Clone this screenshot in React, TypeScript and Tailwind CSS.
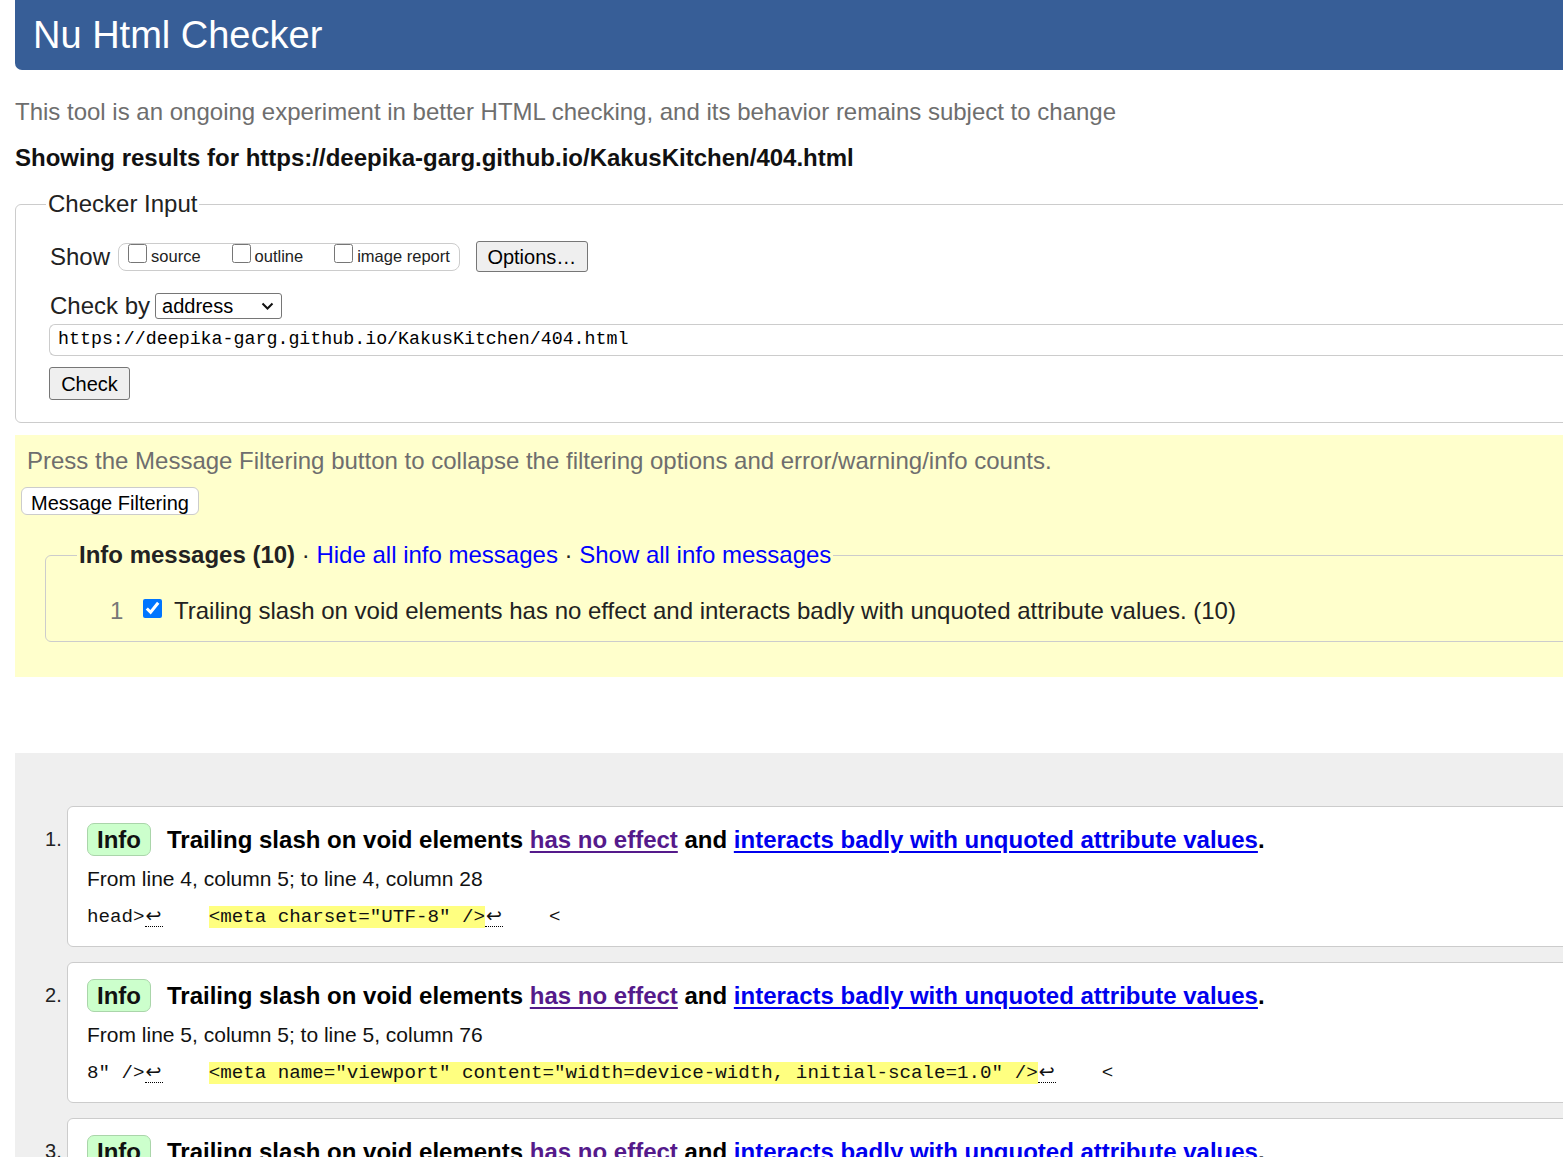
import React from 'react';

const sans = { fontFamily: '"Liberation Sans", Arial, sans-serif' };
const mono = { fontFamily: '"Liberation Mono", "DejaVu Sans Mono", monospace' };

type Extract = { before: string; hl: string; after: string };

interface Message {
  from: string;
  extract: Extract;
}

const messages: Message[] = [
  {
    from: 'From line 4, column 5; to line 4, column 28',
    extract: { before: 'head>', hl: '<meta charset="UTF-8" />', after: '<' },
  },
  {
    from: 'From line 5, column 5; to line 5, column 76',
    extract: {
      before: '8" />',
      hl: '<meta name="viewport" content="width=device-width, initial-scale=1.0" />',
      after: '<',
    },
  },
  {
    from: 'From line 6, column 5; to line 6, column 40',
    extract: { before: '0" />', hl: '<link rel="stylesheet" href="style.css" />', after: '<' },
  },
];

// line feed marker with dotted underline
function Lf() {
  return (
    <span
      className="inline-block w-[18px] text-center border-b border-dotted border-black leading-[21px] text-[19px] align-top"
      style={{ fontFamily: '"DejaVu Sans", sans-serif' }}
    >
      ↩
    </span>
  );
}

function Checkbox({ label, checked }: { label?: string; checked?: boolean }) {
  return (
    <label className="inline-flex items-center">
      <input
        type="checkbox"
        defaultChecked={checked}
        className="w-[19px] h-[19px] m-0 -translate-y-[3px]"
      />
      {label && <span className="ml-[4px] text-[16.5px] text-[#222]">{label}</span>}
    </label>
  );
}

function MessageCard({ index, msg }: { index: number; msg: Message }) {
  return (
    <li className="flex items-start mb-[15px]">
      <span className="w-[52px] shrink-0 pt-[19px] pl-[30px] text-[20px] text-[#222] leading-[28px]">{index}.</span>
      <div className="flex-1 bg-white border border-[#cccccc] rounded-l-[6px] pl-[19px] pt-[16px] pb-[17px]">
        <div className="flex items-center">
          <span className="inline-block bg-[#ccffcc] border border-[#aad5aa] rounded-[7px] w-[64px] text-center h-[33px] leading-[31px] text-[24px] font-bold text-[#111]">
            Info
          </span>
          <span className="ml-[16px] text-[24px] leading-[28px] font-bold text-black">
            Trailing slash on void elements{' '}
            <a href="#" className="text-[#551a8b] underline underline-offset-[3px]">has no effect</a>{' '}
            and{' '}
            <a href="#" className="text-[#0000ee] underline underline-offset-[3px]">
              interacts badly with unquoted attribute values
            </a>
            .
          </span>
        </div>
        <div className="mt-[11px] text-[21px] text-[#111] leading-[24px]">{msg.from}</div>
        <div className="mt-[14px] text-[19.2px] text-[#111] whitespace-pre leading-[24px]" style={mono}>
          {msg.extract.before}
          <Lf />
          {'    '}
          <span className="bg-[#ffff80]">{msg.extract.hl}</span>
          <Lf />
          {'    '}
          {msg.extract.after}
        </div>
      </div>
    </li>
  );
}

export default function App() {
  return (
    <div className="w-[1563px] h-[1157px] overflow-hidden bg-white" style={sans}>
      <div className="w-[1640px] pl-[15px]">
        <header className="h-[70px] bg-[#375e97] rounded-bl-[7px] pl-[18px] flex items-center">
          <h1 className="text-[38px] text-white leading-none">Nu Html Checker</h1>
        </header>

        <p className="mt-[28px] text-[24px] text-[#6e6e6e] leading-[28px]">
          This tool is an ongoing experiment in better HTML checking, and its behavior remains subject to change
        </p>
        <p className="mt-[18px] text-[24px] font-bold text-[#111] leading-[28px]">
          Showing results for https://deepika-garg.github.io/KakusKitchen/404.html
        </p>

        {/* checker input */}
        <fieldset className="mt-[18px] border border-[#cccccc] rounded-l-[6px] pb-[22px]">
          <legend className="ml-[30px] px-[2px] text-[24px] text-[#222] leading-[28px]">Checker Input</legend>
          <div className="pl-[34px]">
            <div className="flex items-center mt-[23px] h-[31px]">
              <span className="text-[24px] text-[#222]">Show</span>
              <div className="ml-[8px] h-[28px] border border-[#cccccc] rounded-[8px] flex items-center pl-[9px] pr-[9px]">
                <Checkbox label="source" />
                <span className="w-[31px]" />
                <Checkbox label="outline" />
                <span className="w-[31px]" />
                <Checkbox label="image report" />
              </div>
              <button className="ml-[16px] h-[31px] w-[112px] bg-[#efefef] border border-[#767676] rounded-[3px] text-[20px] text-black">
                Options…
              </button>
            </div>
            <div className="flex items-center mt-[20px] h-[28px]">
              <span className="text-[24px] text-[#222]">Check by</span>
              <div className="ml-[5px] relative w-[127px] h-[26px] border border-[#767676] rounded-[3px] flex items-center pl-[6px]">
                <span className="text-[20px] text-black">address</span>
                <svg className="absolute right-[7px] top-[8px]" width="13" height="9" viewBox="0 0 13 9">
                  <path d="M1.5 1.5 L6.5 6.5 L11.5 1.5" fill="none" stroke="#111" strokeWidth="2" />
                </svg>
              </div>
            </div>
            <div
              className="mt-[4px] -ml-[1px] h-[32px] border border-[#cccccc] border-r-0 rounded-l-[6px] flex items-center pl-[8px] text-[18.3px] text-black"
              style={mono}
            >
              https://deepika-garg.github.io/KakusKitchen/404.html
            </div>
            <button className="mt-[11px] -ml-[1px] h-[33px] w-[81px] bg-[#efefef] border border-[#767676] rounded-[3px] text-[20px] text-black">
              Check
            </button>
          </div>
        </fieldset>

        {/* message filtering */}
        <section className="mt-[12px] bg-[#ffffcc] pt-[12px] pb-[35px]">
          <p className="pl-[12px] text-[24px] text-[#6e6e6e] leading-[28px]">
            Press the Message Filtering button to collapse the filtering options and error/warning/info counts.
          </p>
          <button className="mt-[12px] ml-[6px] h-[28px] w-[178px] bg-white border border-[#cccccc] rounded-[6px] text-[20px] text-black">
            Message Filtering
          </button>
          <fieldset className="mt-[24px] ml-[30px] border border-[#cccccc] rounded-l-[6px] pb-[16px]">
            <legend className="ml-[31px] px-[2px] text-[24px] leading-[28px]">
              <b className="text-[#222]">Info messages (10)</b>
              <span className="text-[#222]"> · </span>
              <a href="#" className="text-[#0000ff]">Hide all info messages</a>
              <span className="text-[#222]"> · </span>
              <a href="#" className="text-[#0000ff]">Show all info messages</a>
            </legend>
            <div className="flex items-center mt-[28px] h-[28px] pl-[64px]">
              <span className="text-[24px] text-[#777] w-[33px]">1</span>
              <Checkbox checked />
              <span className="ml-[12px] text-[24px] text-[#222]">
                Trailing slash on void elements has no effect and interacts badly with unquoted attribute values. (10)
              </span>
            </div>
          </fieldset>
        </section>

        {/* results */}
        <section className="mt-[76px] bg-[#efefef] pt-[53px] pb-[20px]">
          <ol>
            {messages.map((m, i) => (
              <MessageCard key={i} index={i + 1} msg={m} />
            ))}
          </ol>
        </section>
      </div>
    </div>
  );
}
